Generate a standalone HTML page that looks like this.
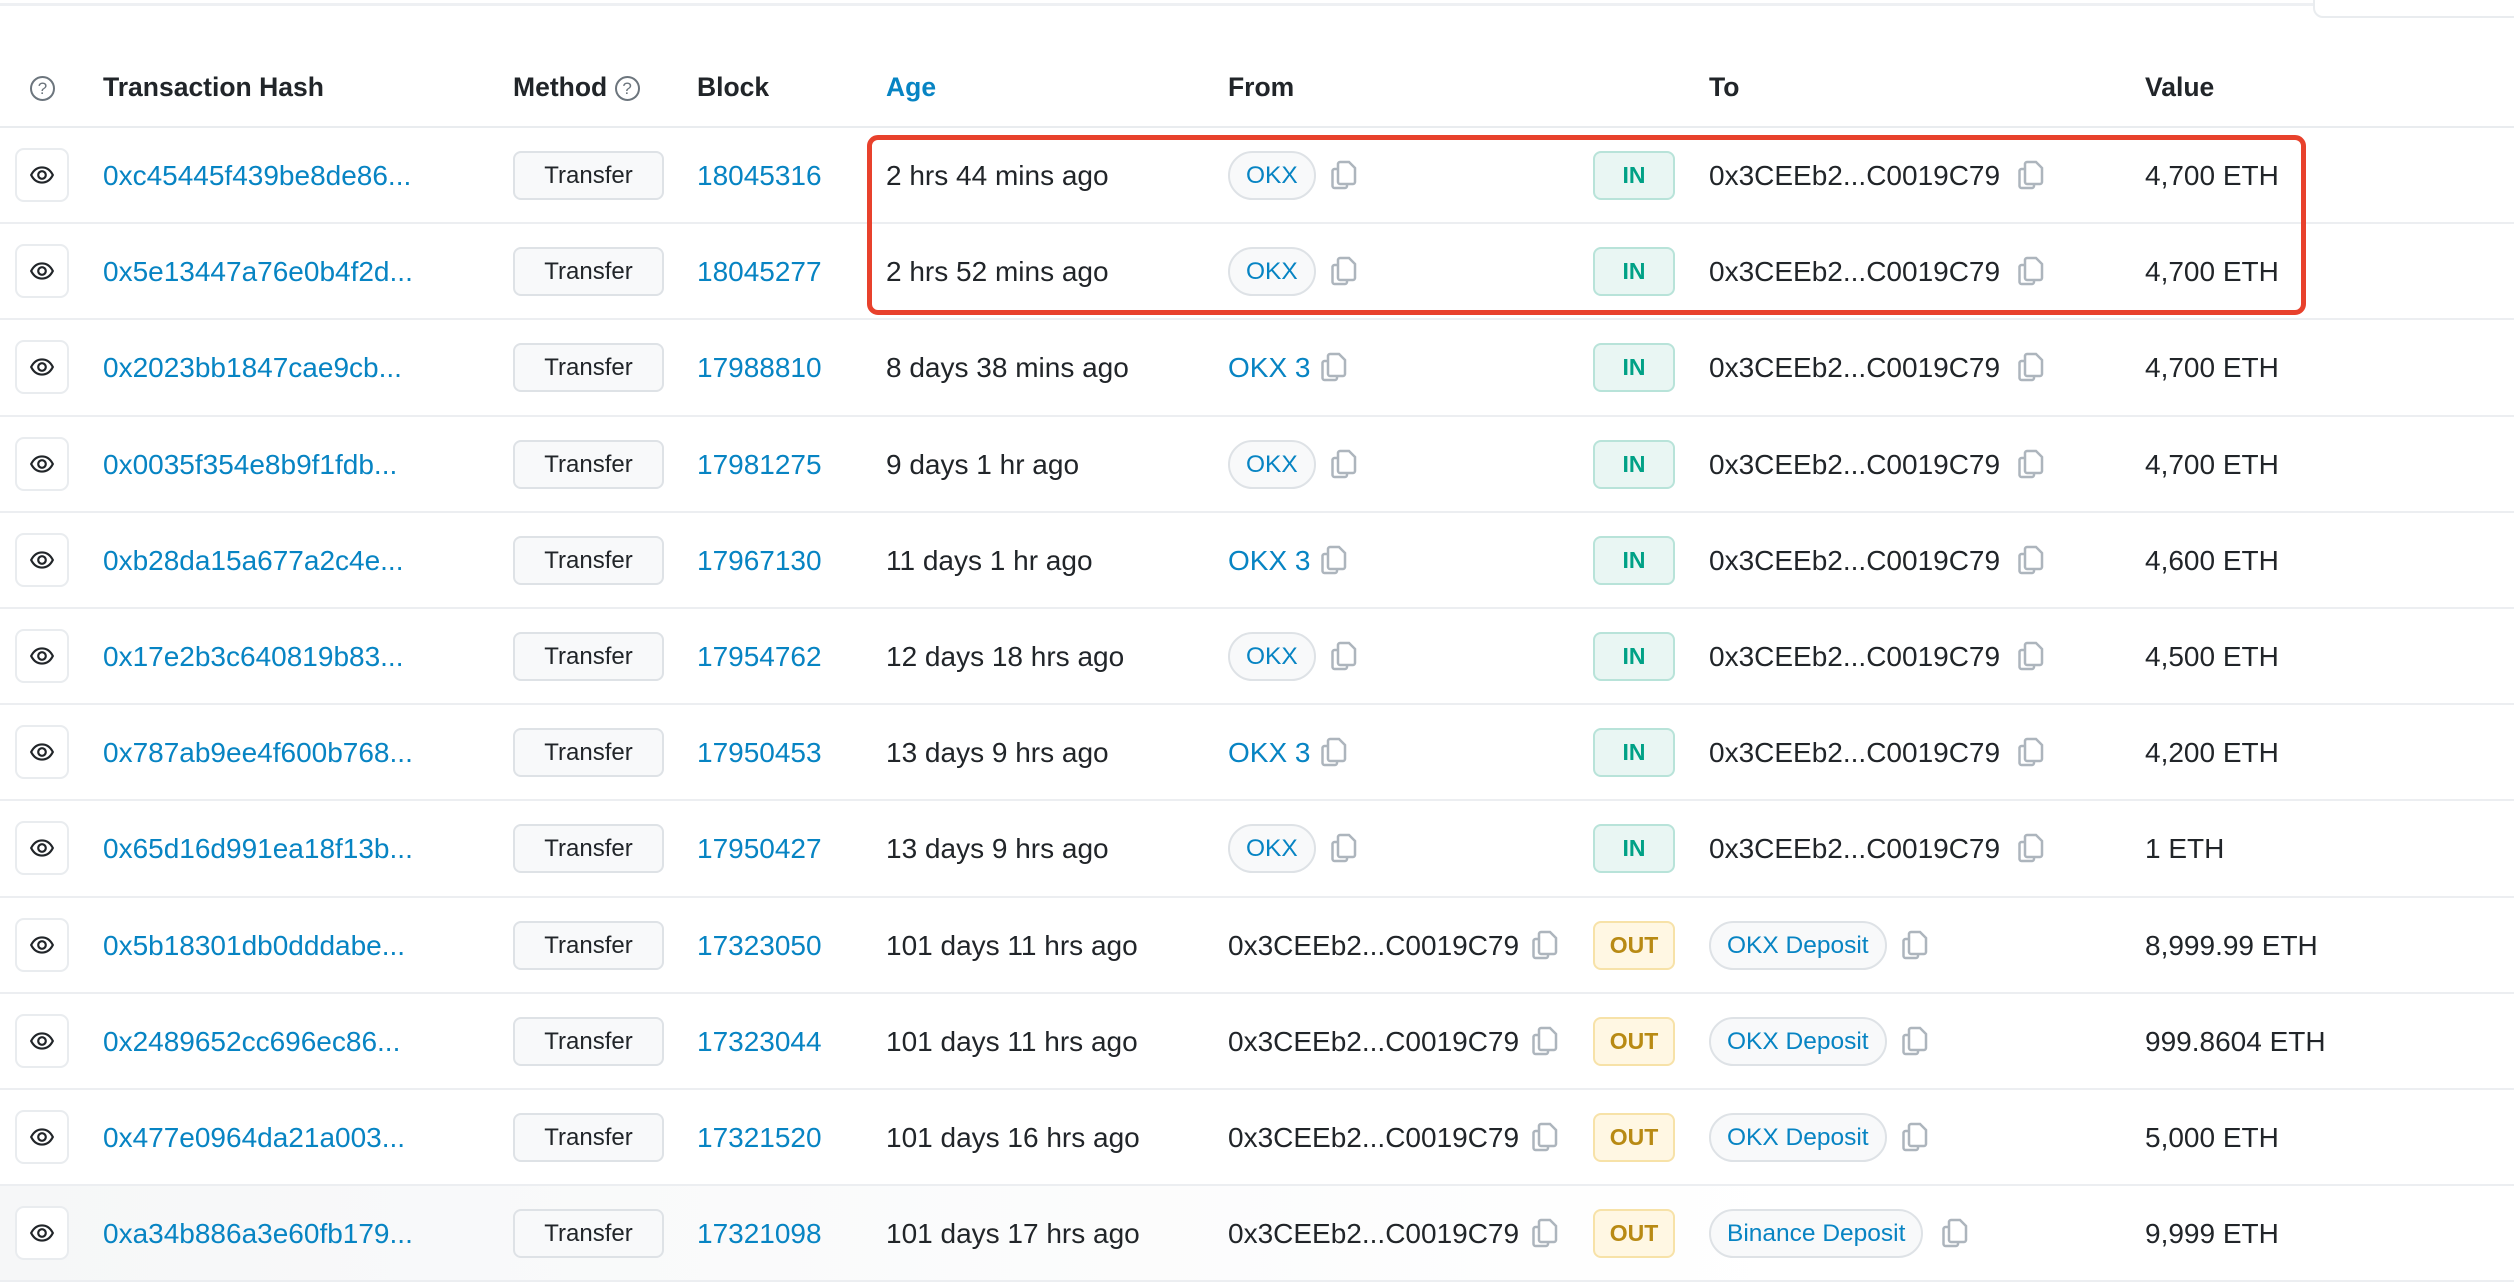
<!DOCTYPE html>
<html><head><meta charset="utf-8"><style>
*{box-sizing:border-box;margin:0;padding:0}
body{width:2514px;height:1264px;overflow:hidden;background:#fff;font-family:"Liberation Sans",Arial,sans-serif;color:#212529;font-size:28px;position:relative}
.topline{position:absolute;left:0;top:3px;width:2514px;height:3px;background:#eef0f3}
.tr{position:absolute;left:2313px;top:-10px;width:260px;height:28px;border:2px solid #e9ecef;border-radius:10px;background:#fff}
.hdr{position:absolute;left:0;top:0;width:2514px;height:128px;border-bottom:2px solid #e9ecef}
.h{position:absolute;top:72px;font-weight:bold;font-size:26.5px;color:#212529}
.q{display:inline-block;width:25px;height:25px;border:2px solid #6c757d;border-radius:50%;font-size:17px;line-height:21px;text-align:center;color:#6c757d;font-weight:normal;vertical-align:2px}
.row{position:absolute;left:0;width:2514px;height:96.2px;border-bottom:2px solid #eceef1}
.row>*{position:absolute}
.eye{left:15px;top:20px;width:54px;height:54px;border:2px solid #e9ecef;border-radius:9px;display:flex;align-items:center;justify-content:center;background:#fff}
.t{top:32px;line-height:32px;white-space:nowrap}
.a{color:#0784c3}
.btn{left:513px;top:23px;width:151px;height:49px;border:2px solid #dee2e6;border-radius:8px;background:#f8f9fa;text-align:center;line-height:45px;font-size:24px}
.pill{top:23px;height:49px;border:2px solid #dee2e6;border-radius:25px;background:#f8f9fa;color:#0784c3;line-height:45px;padding:0 16px;font-size:24.5px;white-space:nowrap}
.badge{left:1593px;top:23px;width:82px;height:49px;border-radius:8px;text-align:center;line-height:45px;font-weight:bold;font-size:23px}
.in{background:#e9f6f3;border:2px solid #b8e3d9;color:#00a186}
.out{background:#fff7e3;border:2px solid #f7e2a8;color:#b88a14}
.cp{top:32px;width:28px;height:30px}
.red{position:absolute;left:867px;top:135px;width:1439px;height:180px;border:5px solid #e8412c;border-radius:11px}
.last{background:linear-gradient(to right,rgba(246,247,248,1) 0%,rgba(255,255,255,1) 72%)}
</style></head><body>
<div class="topline"></div><div class="tr"></div>
<div class="hdr">
<div class="h" style="left:30px"><span class="q">?</span></div>
<div class="h" style="left:103px">Transaction Hash</div>
<div class="h" style="left:513px">Method <span class="q">?</span></div>
<div class="h" style="left:697px">Block</div>
<div class="h" style="left:886px;color:#0784c3">Age</div>
<div class="h" style="left:1228px">From</div>
<div class="h" style="left:1709px">To</div>
<div class="h" style="left:2145px">Value</div>
</div>
<svg width="0" height="0" style="position:absolute"><defs>
<symbol id="eye" viewBox="0 0 24 24"><path d="M2 12C4.5 7 8 5 12 5s7.5 2 10 7c-2.5 5-6 7-10 7s-7.5-2-10-7z" fill="none" stroke="#212529" stroke-width="2"/><circle cx="12" cy="12" r="3.5" fill="none" stroke="#212529" stroke-width="2"/></symbol>
<symbol id="cp" viewBox="0 0 28 30"><path d="M7 9H4.5A2 2 0 0 0 2.5 11v15a2 2 0 0 0 2 2H15a2 2 0 0 0 2-2v-2" fill="none" stroke="#adb5bd" stroke-width="2.5"/><path d="M10 2h9l6 6v14a2 2 0 0 1-2 2H10a2 2 0 0 1-2-2V4a2 2 0 0 1 2-2z" fill="none" stroke="#adb5bd" stroke-width="2.5"/></symbol>
</defs></svg>

<div class="row" style="top:128px"><div class="eye"><svg width="26" height="26"><use href="#eye"/></svg></div><div class="t a" style="left:103px">0xc45445f439be8de86...</div><div class="btn">Transfer</div><div class="t a" style="left:697px">18045316</div><div class="t" style="left:886px">2 hrs 44 mins ago</div><div class="pill" style="left:1228px">OKX</div><svg class="cp" style="left:1330px"><use href="#cp"/></svg><div class="badge in">IN</div><div class="t" style="left:1709px">0x3CEEb2...C0019C79</div><svg class="cp" style="left:2017px"><use href="#cp"/></svg><div class="t" style="left:2145px">4,700 ETH</div></div>

<div class="row" style="top:224.2px"><div class="eye"><svg width="26" height="26"><use href="#eye"/></svg></div><div class="t a" style="left:103px">0x5e13447a76e0b4f2d...</div><div class="btn">Transfer</div><div class="t a" style="left:697px">18045277</div><div class="t" style="left:886px">2 hrs 52 mins ago</div><div class="pill" style="left:1228px">OKX</div><svg class="cp" style="left:1330px"><use href="#cp"/></svg><div class="badge in">IN</div><div class="t" style="left:1709px">0x3CEEb2...C0019C79</div><svg class="cp" style="left:2017px"><use href="#cp"/></svg><div class="t" style="left:2145px">4,700 ETH</div></div>

<div class="row" style="top:320.4px"><div class="eye"><svg width="26" height="26"><use href="#eye"/></svg></div><div class="t a" style="left:103px">0x2023bb1847cae9cb...</div><div class="btn">Transfer</div><div class="t a" style="left:697px">17988810</div><div class="t" style="left:886px">8 days 38 mins ago</div><div class="t a" style="left:1228px">OKX 3</div><svg class="cp" style="left:1320px"><use href="#cp"/></svg><div class="badge in">IN</div><div class="t" style="left:1709px">0x3CEEb2...C0019C79</div><svg class="cp" style="left:2017px"><use href="#cp"/></svg><div class="t" style="left:2145px">4,700 ETH</div></div>

<div class="row" style="top:416.6px"><div class="eye"><svg width="26" height="26"><use href="#eye"/></svg></div><div class="t a" style="left:103px">0x0035f354e8b9f1fdb...</div><div class="btn">Transfer</div><div class="t a" style="left:697px">17981275</div><div class="t" style="left:886px">9 days 1 hr ago</div><div class="pill" style="left:1228px">OKX</div><svg class="cp" style="left:1330px"><use href="#cp"/></svg><div class="badge in">IN</div><div class="t" style="left:1709px">0x3CEEb2...C0019C79</div><svg class="cp" style="left:2017px"><use href="#cp"/></svg><div class="t" style="left:2145px">4,700 ETH</div></div>

<div class="row" style="top:512.8px"><div class="eye"><svg width="26" height="26"><use href="#eye"/></svg></div><div class="t a" style="left:103px">0xb28da15a677a2c4e...</div><div class="btn">Transfer</div><div class="t a" style="left:697px">17967130</div><div class="t" style="left:886px">11 days 1 hr ago</div><div class="t a" style="left:1228px">OKX 3</div><svg class="cp" style="left:1320px"><use href="#cp"/></svg><div class="badge in">IN</div><div class="t" style="left:1709px">0x3CEEb2...C0019C79</div><svg class="cp" style="left:2017px"><use href="#cp"/></svg><div class="t" style="left:2145px">4,600 ETH</div></div>

<div class="row" style="top:609px"><div class="eye"><svg width="26" height="26"><use href="#eye"/></svg></div><div class="t a" style="left:103px">0x17e2b3c640819b83...</div><div class="btn">Transfer</div><div class="t a" style="left:697px">17954762</div><div class="t" style="left:886px">12 days 18 hrs ago</div><div class="pill" style="left:1228px">OKX</div><svg class="cp" style="left:1330px"><use href="#cp"/></svg><div class="badge in">IN</div><div class="t" style="left:1709px">0x3CEEb2...C0019C79</div><svg class="cp" style="left:2017px"><use href="#cp"/></svg><div class="t" style="left:2145px">4,500 ETH</div></div>

<div class="row" style="top:705.2px"><div class="eye"><svg width="26" height="26"><use href="#eye"/></svg></div><div class="t a" style="left:103px">0x787ab9ee4f600b768...</div><div class="btn">Transfer</div><div class="t a" style="left:697px">17950453</div><div class="t" style="left:886px">13 days 9 hrs ago</div><div class="t a" style="left:1228px">OKX 3</div><svg class="cp" style="left:1320px"><use href="#cp"/></svg><div class="badge in">IN</div><div class="t" style="left:1709px">0x3CEEb2...C0019C79</div><svg class="cp" style="left:2017px"><use href="#cp"/></svg><div class="t" style="left:2145px">4,200 ETH</div></div>

<div class="row" style="top:801.4px"><div class="eye"><svg width="26" height="26"><use href="#eye"/></svg></div><div class="t a" style="left:103px">0x65d16d991ea18f13b...</div><div class="btn">Transfer</div><div class="t a" style="left:697px">17950427</div><div class="t" style="left:886px">13 days 9 hrs ago</div><div class="pill" style="left:1228px">OKX</div><svg class="cp" style="left:1330px"><use href="#cp"/></svg><div class="badge in">IN</div><div class="t" style="left:1709px">0x3CEEb2...C0019C79</div><svg class="cp" style="left:2017px"><use href="#cp"/></svg><div class="t" style="left:2145px">1 ETH</div></div>

<div class="row" style="top:897.6px"><div class="eye"><svg width="26" height="26"><use href="#eye"/></svg></div><div class="t a" style="left:103px">0x5b18301db0dddabe...</div><div class="btn">Transfer</div><div class="t a" style="left:697px">17323050</div><div class="t" style="left:886px">101 days 11 hrs ago</div><div class="t" style="left:1228px">0x3CEEb2...C0019C79</div><svg class="cp" style="left:1531px"><use href="#cp"/></svg><div class="badge out">OUT</div><div class="pill" style="left:1709px">OKX Deposit</div><svg class="cp" style="left:1901px"><use href="#cp"/></svg><div class="t" style="left:2145px">8,999.99 ETH</div></div>

<div class="row" style="top:993.8px"><div class="eye"><svg width="26" height="26"><use href="#eye"/></svg></div><div class="t a" style="left:103px">0x2489652cc696ec86...</div><div class="btn">Transfer</div><div class="t a" style="left:697px">17323044</div><div class="t" style="left:886px">101 days 11 hrs ago</div><div class="t" style="left:1228px">0x3CEEb2...C0019C79</div><svg class="cp" style="left:1531px"><use href="#cp"/></svg><div class="badge out">OUT</div><div class="pill" style="left:1709px">OKX Deposit</div><svg class="cp" style="left:1901px"><use href="#cp"/></svg><div class="t" style="left:2145px">999.8604 ETH</div></div>

<div class="row" style="top:1090px"><div class="eye"><svg width="26" height="26"><use href="#eye"/></svg></div><div class="t a" style="left:103px">0x477e0964da21a003...</div><div class="btn">Transfer</div><div class="t a" style="left:697px">17321520</div><div class="t" style="left:886px">101 days 16 hrs ago</div><div class="t" style="left:1228px">0x3CEEb2...C0019C79</div><svg class="cp" style="left:1531px"><use href="#cp"/></svg><div class="badge out">OUT</div><div class="pill" style="left:1709px">OKX Deposit</div><svg class="cp" style="left:1901px"><use href="#cp"/></svg><div class="t" style="left:2145px">5,000 ETH</div></div>

<div class="row last" style="top:1186.2px"><div class="eye"><svg width="26" height="26"><use href="#eye"/></svg></div><div class="t a" style="left:103px">0xa34b886a3e60fb179...</div><div class="btn">Transfer</div><div class="t a" style="left:697px">17321098</div><div class="t" style="left:886px">101 days 17 hrs ago</div><div class="t" style="left:1228px">0x3CEEb2...C0019C79</div><svg class="cp" style="left:1531px"><use href="#cp"/></svg><div class="badge out">OUT</div><div class="pill" style="left:1709px">Binance Deposit</div><svg class="cp" style="left:1941px"><use href="#cp"/></svg><div class="t" style="left:2145px">9,999 ETH</div></div>

<div class="red"></div>
</body></html>
